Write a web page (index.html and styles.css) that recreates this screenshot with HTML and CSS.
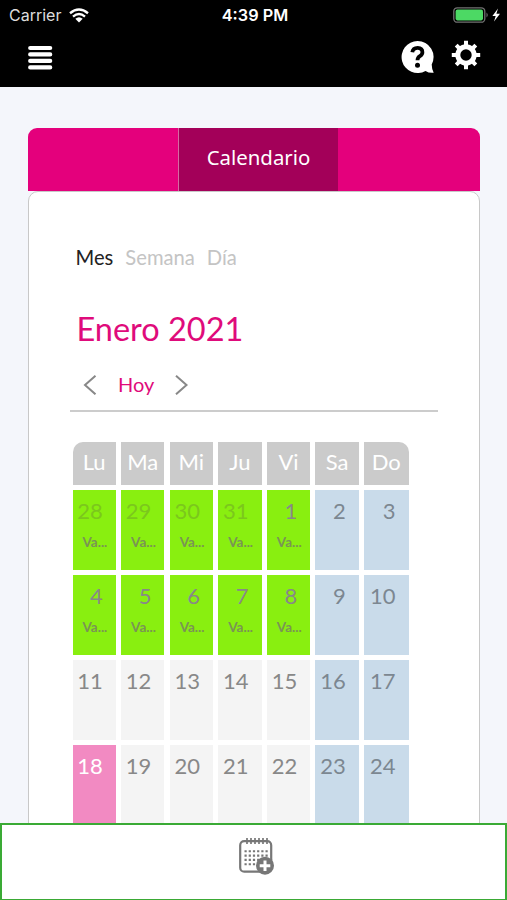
FILE: index.html
```html
<!DOCTYPE html>
<html lang="es">
<head>
  <meta charset="UTF-8">
  <meta name="viewport" content="width=device-width, initial-scale=1.0">
  <title>Calendario</title>
  <link rel="stylesheet" href="styles.css">
</head>
<body>
  <header class="header">
    <div class="status">
      <div class="carrier">
        <span>Carrier</span>
        <svg width="20" height="15" viewBox="0 0 20 15" fill="none" stroke="#fff" stroke-width="2.4">
          <path d="M1 5.2Q10 -2.2 19 5.2M4 8.6Q10 3.6 16 8.6"/>
          <path d="M6.3 10.7Q10 7.6 13.7 10.7L10 14.4Z" fill="#fff" stroke="none"/>
        </svg>
      </div>
      <div class="time">4:39 PM</div>
      <div class="battery">
        <svg width="48" height="16" viewBox="0 0 48 16">
          <rect x="0.8" y="0.8" width="31" height="14.4" rx="3.5" fill="none" stroke="#727272" stroke-width="1.3"/>
          <rect x="2.6" y="2.6" width="27.4" height="10.8" rx="1.8" fill="#4cd964"/>
          <path d="M33.5 5.5Q36 8 33.5 10.5Z" fill="#727272"/>
          <path d="M45 1.6L39.4 9H42.7L41 14.4L47 6.7H43.4Z" fill="#fff"/>
        </svg>
      </div>
    </div>
    <nav class="toolbar">
      <svg class="menu" width="26" height="26" viewBox="0 0 26 26" stroke="#fff" stroke-width="4.2" stroke-linecap="round">
        <path d="M3.2 3H23.2M3.2 9.4H23.2M3.2 15.9H23.2M3.2 22.4H23.2"/>
      </svg>
      <svg class="help" width="34" height="34" viewBox="0 0 34 34">
        <path d="M16.5 1A16 16 0 1 0 24.5 30.9Q28 33.2 32.7 32.7Q30.8 29.5 30.7 24.5A16 16 0 0 0 16.5 1Z" fill="#fff"/>
        <path d="M11.3 12.3Q11.9 7.8 16.7 7.8Q21.4 7.9 21.4 12.2Q21.4 14.6 18.9 16.1Q16.5 17.5 16.5 20.3" fill="none" stroke="#000" stroke-width="3.8"/>
        <circle cx="16.5" cy="25.2" r="2.5"/>
      </svg>
      <svg class="gear" width="30" height="30" viewBox="-15 -15 30 30" stroke="#fff">
        <circle r="8.2" fill="none" stroke-width="5"/>
        <path d="M0 -9V-14.2M0 9V14.2M-9 0H-14.2M9 0H14.2M-6.5 -6.5L-9.8 -9.8M6.5 -6.5L9.8 -9.8M-6.5 6.5L-9.8 9.8M6.5 6.5L9.8 9.8" stroke-width="4"/>
      </svg>
    </nav>
  </header>

  <main class="content">
    <div class="tabs">
      <div class="tab"></div>
      <div class="tab active">Calendario</div>
      <div class="tab"></div>
    </div>
    <section class="card">
      <div class="views">
        <span class="current">Mes</span>
        <span>Semana</span>
        <span>Día</span>
      </div>
      <h1>Enero 2021</h1>
      <div class="pager">
        <svg width="14" height="22" viewBox="0 0 14 22"><path d="M12.5 2.7L2 12L12.5 21.3"/></svg>
        <span>Hoy</span>
        <svg width="14" height="22" viewBox="0 0 14 22"><path d="M1 2.7L11.5 12L1 21.3"/></svg>
      </div>
      <div class="calendar">
        <div class="name">Lu</div>
        <div class="name">Ma</div>
        <div class="name">Mi</div>
        <div class="name">Ju</div>
        <div class="name">Vi</div>
        <div class="name">Sa</div>
        <div class="name">Do</div>

        <div class="day vacation other">28<small>Va...</small></div>
        <div class="day vacation other">29<small>Va...</small></div>
        <div class="day vacation other">30<small>Va...</small></div>
        <div class="day vacation other">31<small>Va...</small></div>
        <div class="day vacation">1<small>Va...</small></div>
        <div class="day weekend">2</div>
        <div class="day weekend">3</div>

        <div class="day vacation">4<small>Va...</small></div>
        <div class="day vacation">5<small>Va...</small></div>
        <div class="day vacation">6<small>Va...</small></div>
        <div class="day vacation">7<small>Va...</small></div>
        <div class="day vacation">8<small>Va...</small></div>
        <div class="day weekend">9</div>
        <div class="day weekend">10</div>

        <div class="day">11</div>
        <div class="day">12</div>
        <div class="day">13</div>
        <div class="day">14</div>
        <div class="day">15</div>
        <div class="day weekend">16</div>
        <div class="day weekend">17</div>

        <div class="day today">18</div>
        <div class="day">19</div>
        <div class="day">20</div>
        <div class="day">21</div>
        <div class="day">22</div>
        <div class="day weekend">23</div>
        <div class="day weekend">24</div>
      </div>
    </section>
  </main>

  <footer class="footer">
    <svg width="36" height="38" viewBox="0 0 36 38">
      <rect x="1.2" y="4.2" width="31" height="30.5" rx="4" fill="none" stroke="#777" stroke-width="2.2"/>
      <path d="M8 1V7M12 1V7M16 1V7M20 1V7M24 1V7M28 1V7" stroke="#777" stroke-width="1.7"/>
      <path d="M5.5 14.3H29M5.5 18.6H29M5.5 22.9H22M5.5 27.2H18" stroke="#777" stroke-width="2.1" stroke-dasharray="2.2 2"/>
      <circle cx="26" cy="28.7" r="9" fill="#777"/>
      <path d="M26 23.4V34M20.7 28.7H31.3" stroke="#fff" stroke-width="3"/>
    </svg>
  </footer>
</body>
</html>
```
FILE: styles.css
```css
* {
  box-sizing: border-box;
}

body {
  margin: 0;
  height: 100vh;
  display: flex;
  flex-direction: column;
  overflow: hidden;
  background: #f4f6fb;
  font-family: Lato, sans-serif;
}

svg {
  display: block;
  flex-shrink: 0;
}

.header {
  height: 87px;
  flex-shrink: 0;
  background: #000;
  color: #fff;
}

.status {
  height: 30px;
  padding: 0 6px 0 9px;
  display: grid;
  grid-template-columns: 1fr auto 1fr;
  align-items: center;
  font-family: Inter, sans-serif;
  font-size: 16px;
}

.carrier {
  display: flex;
  align-items: center;
  gap: 8px;
  color: #ddd;
}

.time {
  font-weight: 600;
  font-size: 16.3px;
}

.battery {
  justify-self: end;
}

.toolbar {
  display: flex;
  padding: 10px 26px 0 27px;
}

.menu {
  margin: 5px auto 0 0;
}

.help {
  margin-right: 16px;
}

.content {
  flex: 1;
  min-height: 0;
  padding: 41px 27px 0 28px;
  overflow: hidden;
}

.tabs {
  height: 63px;
  display: grid;
  grid-template-columns: 150px 160px 1fr;
  background: #e4007c;
  border-radius: 9px 9px 0 0;
  overflow: hidden;
}

.active {
  background: #a30059;
  border-left: 1px solid #d56aa3;
  color: #fff;
  font-family: "Noto Sans", sans-serif;
  font-size: 20.4px;
  line-height: 58px;
  text-align: center;
}

.card {
  height: 700px;
  padding: 53px 41px 0;
  background: #fff;
  border: 1px solid #c8c8c8;
  border-radius: 10px;
}

.views {
  display: flex;
  gap: 12px;
  padding-left: 5.5px;
  font-size: 20.2px;
  line-height: 24px;
  color: #c4c4c4;
}

.views .current {
  color: #222;
}

h1 {
  margin: 39px 0 0 6.5px;
  font-size: 32.5px;
  font-weight: 400;
  line-height: 42px;
  color: #df0b7b;
}

.pager {
  height: 62px;
  display: flex;
  align-items: center;
  gap: 21px;
  padding: 8px 0 0 13px;
  border-bottom: 2px solid #ccc;
  font-size: 20px;
  color: #df0b7b;
}

.pager path {
  fill: none;
  stroke: #888;
  stroke-width: 2;
}

.calendar {
  display: grid;
  grid-template-columns: repeat(6, 43.3px) 44.5px;
  grid-template-rows: 43px repeat(4, 80px);
  gap: 5px 5.3px;
  margin: 30px 0 0 2.5px;
}

.name {
  background: #cbcbcb;
  color: #fff;
  font-size: 22px;
  line-height: 40px;
  text-align: center;
}

.name:first-child {
  border-top-left-radius: 10px;
}

.name:nth-child(7) {
  border-top-right-radius: 10px;
}

.day {
  padding: 6px 13px 0 0;
  background: #f4f4f4;
  color: #888;
  font-size: 22px;
  line-height: 30px;
  text-align: right;
}

.vacation {
  background: #89ef10;
}

.weekend {
  background: #c9dbea;
  color: #7c8791;
}

.today {
  background: #f28ac2;
  color: #fff;
}

.other {
  color: #7bc71d;
}

.day small {
  display: block;
  margin-right: -4.5px;
  font-size: 13.5px;
  font-weight: 700;
  line-height: 33px;
  color: #7a9455;
}

.footer {
  height: 77px;
  flex-shrink: 0;
  display: flex;
  justify-content: center;
  padding: 12px 0 0 7px;
  background: #fff;
  border: 2px solid #3aaa35;
  border-bottom-width: 1px;
}
```
